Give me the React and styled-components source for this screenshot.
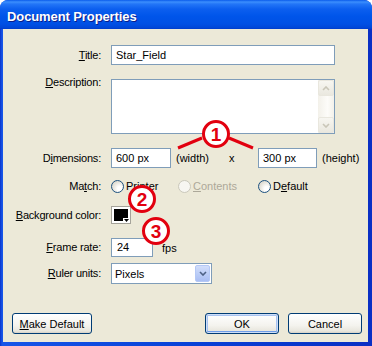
import styled, { createGlobalStyle } from "styled-components";

const GlobalStyle = createGlobalStyle`
  html, body {
    margin: 0;
    padding: 0;
    background: #ffffff;
  }
  body {
    font-family: "Liberation Sans", Arial, sans-serif;
    font-size: 11px;
    color: #000;
  }
`;

const Window = styled.div`
  position: relative;
  width: 372px;
  height: 346px;
  box-sizing: border-box;
  display: flex;
  flex-direction: column;
  background: linear-gradient(to right, #0A33C9 0px, #1655E8 2px, #0842D8 50%, #0A2FC4 100%);
  border-radius: 8px 8px 0 0;
  overflow: hidden;
`;

const TitleBar = styled.div`
  height: 29px;
  flex: none;
  box-sizing: border-box;
  padding: 3px 0 0 7px;
  display: flex;
  align-items: center;
  background: linear-gradient(
    to bottom,
    #0A5CEB 0px,
    #3C8FFD 2px,
    #2376F7 4px,
    #0C5FEF 9px,
    #0055EA 16px,
    #0050E4 24px,
    #0046D6 28px,
    #0039C8 29px
  );
  color: #fff;
  font-weight: bold;
  font-size: 13px;
  letter-spacing: -0.1px;
  text-shadow: 1px 1px 0 #0B1E8A;
`;

const Body = styled.div`
  flex: 1;
  margin: 0 4px 4px 3px;
  background: #ECE9D8;
  display: flex;
  flex-direction: column;
`;

const Form = styled.div`
  padding: 16px 0 0 8px;
  display: flex;
  flex-direction: column;
`;

const Row = styled.div`
  display: flex;
  align-items: ${(p) => (p.$top ? "flex-start" : "center")};
  height: ${(p) => p.$h}px;
  margin-top: ${(p) => p.$mt || 0}px;
`;

const Label = styled.div`
  width: 90px;
  flex: none;
  margin-right: 10px;
  text-align: right;
  line-height: 13px;
  white-space: nowrap;
  letter-spacing: -0.2px;
  margin-top: ${(p) => p.$offset || 0}px;
`;

const Key = styled.span`
  text-decoration: underline;
  text-underline-offset: 1px;
`;

const Field = styled.div`
  width: ${(p) => p.$w}px;
  height: ${(p) => p.$h || 20}px;
  box-sizing: border-box;
  border: 1px solid #7F9DB9;
  background: #fff;
  padding-left: ${(p) => p.$pl || 4}px;
  display: flex;
  align-items: center;
  flex: none;
  line-height: 13px;
`;

const TextArea = styled.div`
  width: 224px;
  height: 55px;
  box-sizing: border-box;
  border: 1px solid #7F9DB9;
  background: #fff;
  display: flex;
  justify-content: flex-end;
`;

const ScrollBar = styled.div`
  width: 16px;
  height: 100%;
  background: linear-gradient(to right, #F3F1EA, #FDFCF9 60%, #F3F1EA);
  display: flex;
  flex-direction: column;
  justify-content: space-between;
`;

const ScrollButton = styled.div`
  width: 16px;
  height: 16px;
  box-sizing: border-box;
  border: 1px solid #E9E7DE;
  border-radius: 2px;
  background: linear-gradient(to bottom, #F7F6F1, #EAE8DF);
  display: flex;
  align-items: center;
  justify-content: center;
`;

const Unit = styled.span`
  width: ${(p) => p.$w}px;
  flex: none;
  padding-left: ${(p) => p.$pl || 0}px;
  color: ${(p) => (p.$disabled ? "#ACA899" : "#000")};
`;

const RadioOption = styled.div`
  width: ${(p) => p.$w}px;
  flex: none;
  display: flex;
  align-items: center;
  gap: 2px;
  color: ${(p) => (p.$disabled ? "#ACA899" : "#000")};
`;

const Radio = styled.span`
  width: 13px;
  height: 13px;
  box-sizing: border-box;
  border-radius: 50%;
  border: 1px solid ${(p) => (p.$disabled ? "#CAC8BB" : "#1C5180")};
  background: ${(p) =>
    p.$disabled
      ? "#F7F6F1"
      : "radial-gradient(circle at 70% 70%, #FFFFFF 20%, #E6E4DC 60%, #CFCCC0 100%)"};
  flex: none;
`;

const Swatch = styled.div`
  position: relative;
  width: 20px;
  height: 18px;
  box-sizing: border-box;
  border: 1px solid #A5A39A;
  background: #fff;
  padding: 2px;
`;

const SwatchColor = styled.div`
  width: 14px;
  height: 12px;
  background: #000;
`;

const SwatchArrow = styled.div`
  position: absolute;
  right: 0;
  bottom: 0;
  width: 7px;
  height: 5px;
  background: #fff;
  display: flex;
  align-items: flex-end;
  justify-content: center;
  padding-bottom: 1px;
  box-sizing: border-box;
`;

const Select = styled.div`
  width: 101px;
  height: 21px;
  box-sizing: border-box;
  border: 1px solid #7F9DB9;
  background: #fff;
  display: flex;
  align-items: center;
  padding: 1px;
`;

const SelectText = styled.span`
  flex: 1;
  padding-left: 2px;
`;

const SelectButton = styled.div`
  width: 15px;
  height: 17px;
  box-sizing: border-box;
  border: 1px solid #B4C8F6;
  border-radius: 2px;
  background: linear-gradient(to bottom, #D2DEFB, #B8CBF6 60%, #A9BEF3);
  display: flex;
  align-items: center;
  justify-content: center;
`;

const Footer = styled.div`
  margin-top: auto;
  padding: 0 6px 8px 9px;
  display: flex;
  align-items: center;
`;

const Spacer = styled.div`
  flex: 1;
`;

const Button = styled.div`
  width: ${(p) => p.$w}px;
  height: 21px;
  box-sizing: border-box;
  border: 1px solid #003C74;
  border-radius: 3px;
  background: linear-gradient(to bottom, #FFFFFF, #F4F3EE 60%, #E8E6DD 90%, #D6D0C5);
  display: flex;
  align-items: center;
  justify-content: center;
  margin-left: ${(p) => p.$ml || 0}px;
  box-shadow: ${(p) =>
    p.$default ? "inset 0 0 0 1px #CEDEF7, inset 0 -1px 0 1px #6F9DE8, inset 0 0 0 2px #A8C3F0" : "none"};
`;

const Lines = styled.svg`
  position: absolute;
  left: 0;
  top: 0;
  pointer-events: none;
`;

const Callout = styled.div`
  position: absolute;
  left: ${(p) => p.$x - 14}px;
  top: ${(p) => p.$y - 14}px;
  width: 28px;
  height: 28px;
  box-sizing: border-box;
  border: 3px solid #E2000F;
  border-radius: 50%;
  background: #fff;
  color: #E2000F;
  font-weight: bold;
  font-size: 19px;
  display: flex;
  align-items: center;
  justify-content: center;
  line-height: 1;
`;

const Chevron = ({ color, up }) => (
  <svg width="8" height="5" viewBox="0 0 8 5">
    <path
      d={up ? "M1 4 L4 1 L7 4" : "M1 1 L4 4 L7 1"}
      fill="none"
      stroke={color}
      strokeWidth="1.6"
    />
  </svg>
);

export default function App() {
  return (
    <>
      <GlobalStyle />
      <Window>
        <TitleBar>Document Properties</TitleBar>
        <Body>
          <Form>
            <Row $h={20}>
              <Label>
                <Key>T</Key>itle:
              </Label>
              <Field $w={224}>Star_Field</Field>
            </Row>
            <Row $h={55} $mt={14} $top>
              <Label $offset={-3}>
                <Key>D</Key>escription:
              </Label>
              <TextArea>
                <ScrollBar>
                  <ScrollButton>
                    <Chevron color="#C9C6B8" up />
                  </ScrollButton>
                  <ScrollButton>
                    <Chevron color="#C9C6B8" />
                  </ScrollButton>
                </ScrollBar>
              </TextArea>
            </Row>
            <Row $h={20} $mt={14}>
              <Label>
                D<Key>i</Key>mensions:
              </Label>
              <Field $w={60}>600 px</Field>
              <Unit $w={53} $pl={5}>(width)</Unit>
              <Unit $w={29}>x</Unit>
              <Field $w={59}>300 px</Field>
              <Unit $w={50} $pl={5}>(height)</Unit>
            </Row>
            <Row $h={20} $mt={8}>
              <Label>
                Ma<Key>t</Key>ch:
              </Label>
              <RadioOption $w={67}>
                <Radio />
                <span>
                  P<Key>r</Key>inter
                </span>
              </RadioOption>
              <RadioOption $w={80} $disabled>
                <Radio $disabled />
                <span>
                  <Key>C</Key>ontents
                </span>
              </RadioOption>
              <RadioOption $w={80}>
                <Radio />
                <span>
                  D<Key>e</Key>fault
                </span>
              </RadioOption>
            </Row>
            <Row $h={18} $mt={10}>
              <Label>
                <Key>B</Key>ackground color:
              </Label>
              <Swatch>
                <SwatchColor />
                <SwatchArrow>
                  <svg width="5" height="3" viewBox="0 0 5 3">
                    <path d="M0 0 H5 L2.5 3 Z" fill="#000" />
                  </svg>
                </SwatchArrow>
              </Swatch>
            </Row>
            <Row $h={19} $mt={14}>
              <Label>
                <Key>F</Key>rame rate:
              </Label>
              <Field $w={42} $h={19} $pl={5}>
                24
              </Field>
              <Unit $w={30} $pl={9}>fps</Unit>
            </Row>
            <Row $h={21} $mt={6}>
              <Label>
                <Key>R</Key>uler units:
              </Label>
              <Select>
                <SelectText>Pixels</SelectText>
                <SelectButton>
                  <Chevron color="#4D6185" />
                </SelectButton>
              </Select>
            </Row>
          </Form>
          <Footer>
            <Button $w={80}>
              <span>
                <Key>M</Key>ake Default
              </span>
            </Button>
            <Spacer />
            <Button $w={74} $default>
              OK
            </Button>
            <Button $w={74} $ml={9}>
              Cancel
            </Button>
          </Footer>
        </Body>
        <Lines width="372" height="346" viewBox="0 0 372 346">
          <line x1="178" y1="148" x2="202" y2="138" stroke="#E2000F" strokeWidth="3" />
          <line x1="229" y1="138" x2="253" y2="148" stroke="#E2000F" strokeWidth="3" />
        </Lines>
        <Callout $x={216} $y={134}>1</Callout>
        <Callout $x={142} $y={199}>2</Callout>
        <Callout $x={156} $y={231}>3</Callout>
      </Window>
    </>
  );
}
